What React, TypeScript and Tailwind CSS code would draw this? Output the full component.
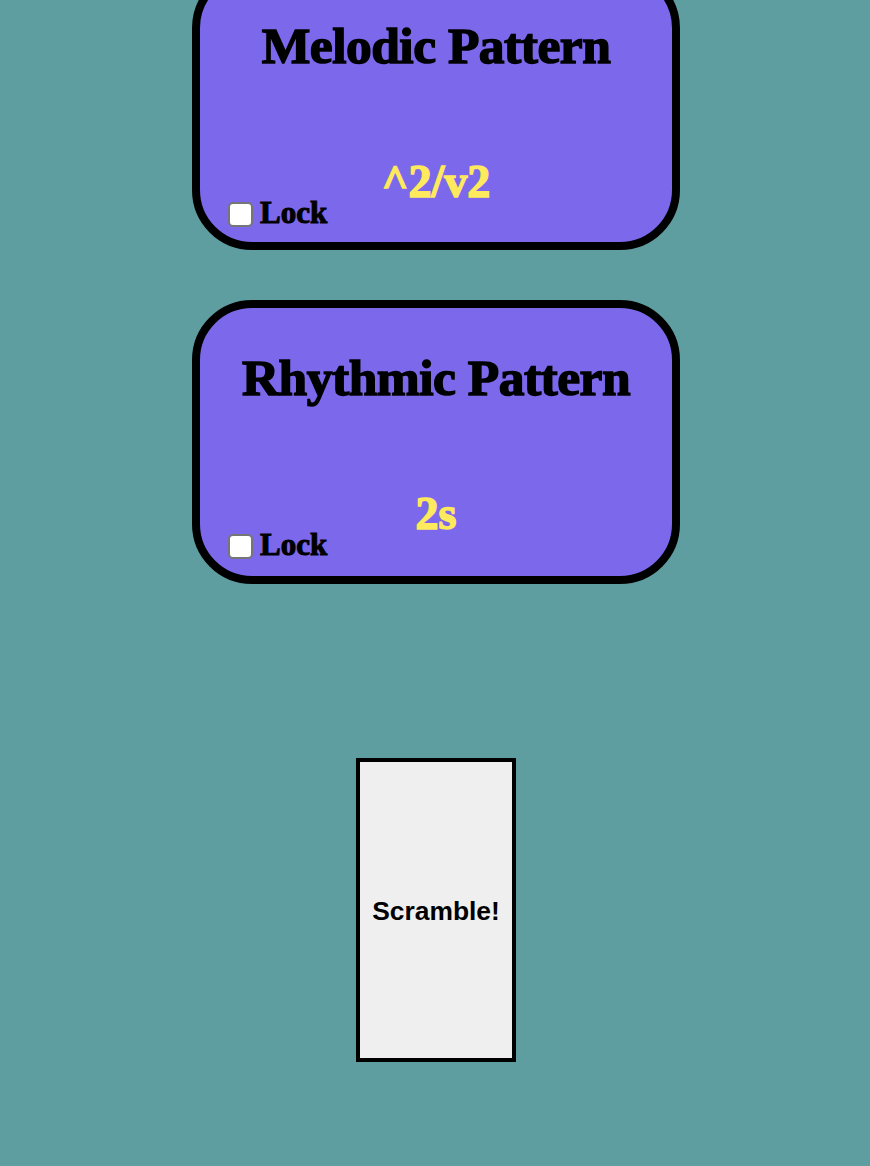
function PatternCard({ title, value, className }: { title: string; value: string; className: string }) {
  return (
    <div className={`box-border flex w-[488px] flex-col rounded-[60px] border-8 border-black bg-[#7b68ea] font-['Liberation_Serif',serif] ${className}`}>
      <h2 className="mt-[41px] text-center text-[51.5px] leading-[58px] font-bold tracking-[-0.5px] text-black [-webkit-text-stroke:1.5px_black]">
        {title}
      </h2>
      <div className="mt-[94px] text-center text-[46px] leading-[26px] font-bold text-[#ffe95c] [-webkit-text-stroke:1.5px_#ffe95c]">
        {value}
      </div>
      <label className="ml-[28px] flex items-center gap-[7px]">
        <input
          type="checkbox"
          className="m-0 mt-[2px] box-border h-[25px] w-[25px] appearance-none rounded-[5px] border-2 border-[#767676] bg-white"
        />
        <span className="text-[31px] leading-[36px] font-bold text-black [-webkit-text-stroke:1px_black]">Lock</span>
      </label>
    </div>
  );
}

export default function App() {
  return (
    <div className="box-border flex min-h-[1166px] flex-col items-center overflow-hidden bg-[#5f9ea0] pl-[2px]">
      <div className="mt-[-32px] flex flex-col gap-[50px]">
        <PatternCard title="Melodic Pattern" value="^2/v2" className="h-[282px]" />
        <PatternCard title="Rhythmic Pattern" value="2s" className="h-[284px]" />
      </div>
      <button className="mt-[174px] box-border h-[304px] w-[160px] border-4 border-black bg-[#efefef] pt-[4px] font-['Liberation_Sans',sans-serif] text-[26.4px] font-bold text-black">
        Scramble!
      </button>
    </div>
  );
}
